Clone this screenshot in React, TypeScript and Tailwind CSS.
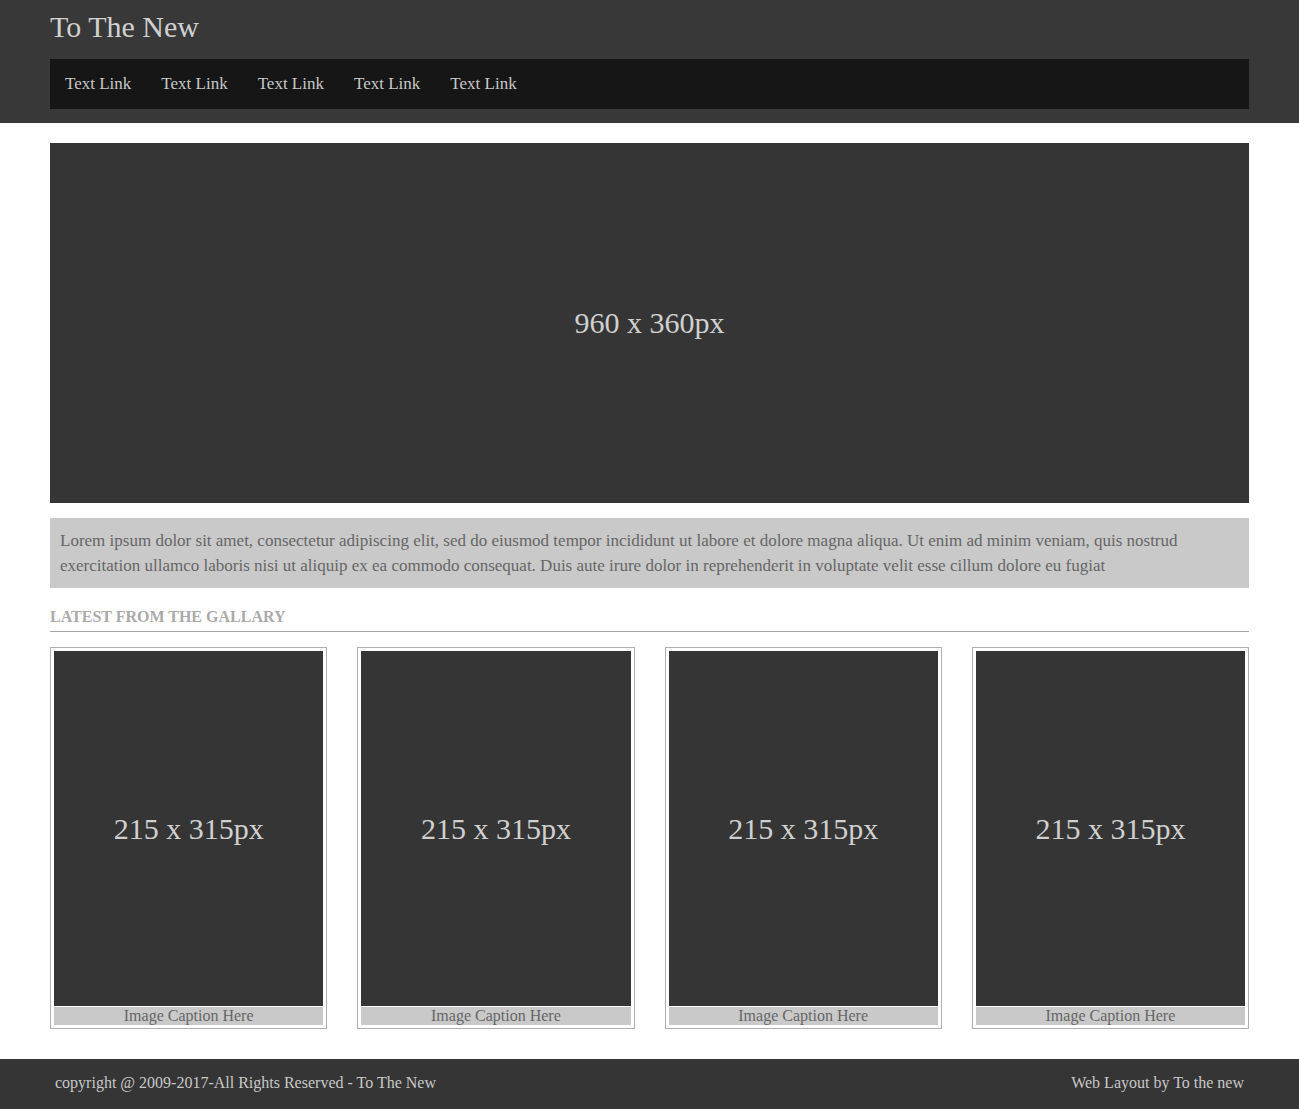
import React from 'react';

const links = ['Text Link', 'Text Link', 'Text Link', 'Text Link', 'Text Link'];

const GalleryCard = () => (
  <div className="border border-[#b0b0b0] p-[3px]">
    <div className="h-[355px] bg-[#353535] flex items-center justify-center text-[30px] text-[#d0d0d0]">
      215 x 315px
    </div>
    <div className="mt-px h-[18px] bg-[#c9c9c9] text-center text-[16px] leading-[18px] text-[#666]">
      Image Caption Here
    </div>
  </div>
);

const App = () => {
  return (
    <div className="min-h-screen bg-white font-['Liberation_Serif',serif]">
      <header className="bg-[#383838] px-[50px] pt-[6px] pb-[14px]">
        <h1 className="text-[30px] leading-[41px] text-[#d0d0d0]">To The New</h1>
        <nav className="mt-[12px] h-[50px] bg-[#161616] flex items-center px-[15px] gap-[30px]">
          {links.map((l, i) => (
            <a key={i} href="#" className="text-[17px] text-[#c8c8c8]">{l}</a>
          ))}
        </nav>
      </header>

      <main className="px-[50px] pt-[20px]">
        <div className="h-[360px] pb-[2px] bg-[#353535] flex items-center justify-center text-[30px] text-[#d0d0d0]">
          960 x 360px
        </div>

        <p className="mt-[15px] bg-[#c9c9c9] px-[10px] py-[10px] text-[17px] leading-[25px] text-[#666]">
          Lorem ipsum dolor sit amet, consectetur adipiscing elit, sed do eiusmod tempor incididunt ut labore et dolore magna aliqua. Ut enim ad minim veniam, quis nostrud exercitation ullamco laboris nisi ut aliquip ex ea commodo consequat. Duis aute irure dolor in reprehenderit in voluptate velit esse cillum dolore eu fugiat
        </p>

        <h2 className="mt-[19px] pb-[4px] border-b border-[#aaa] text-[16px] leading-[20px] font-bold text-[#aaa]">
          LATEST FROM THE GALLARY
        </h2>

        <div className="mt-[15px] grid grid-cols-4 gap-[30px]">
          <GalleryCard />
          <GalleryCard />
          <GalleryCard />
          <GalleryCard />
        </div>
      </main>

      <footer className="mt-[30px] h-[50px] pb-[2px] bg-[#353535] flex items-center justify-between px-[55px] text-[16px] text-[#c8c8c8]">
        <span>copyright @ 2009-2017-All Rights Reserved - To The New</span>
        <span>Web Layout by To the new</span>
      </footer>
    </div>
  );
};

export default App;
